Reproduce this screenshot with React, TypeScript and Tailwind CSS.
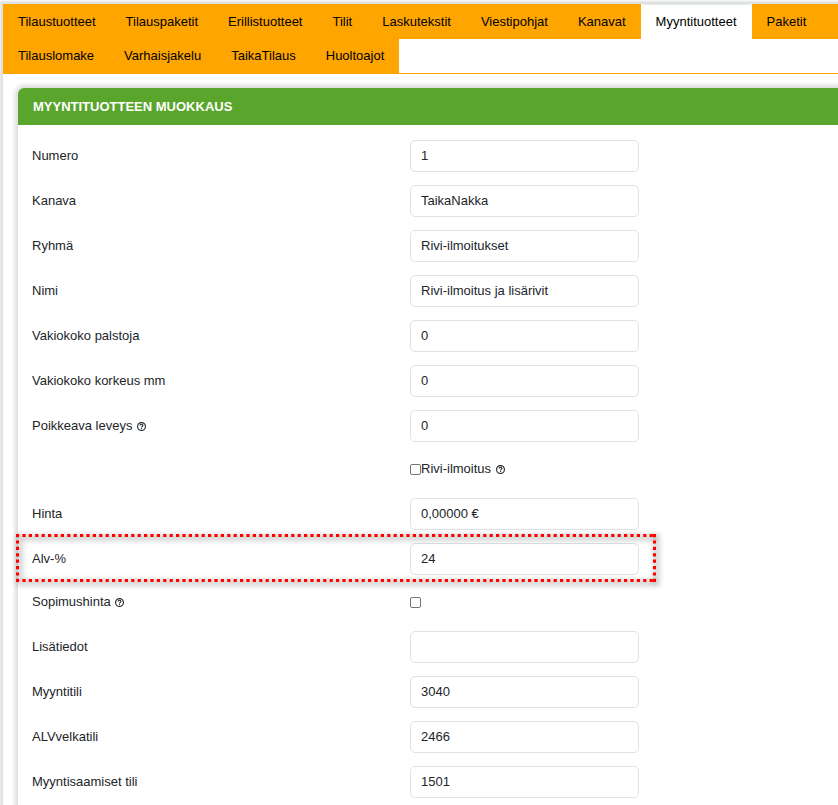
import type { ReactNode } from "react";

const tabs = [
  "Tilaustuotteet",
  "Tilauspaketit",
  "Erillistuotteet",
  "Tilit",
  "Laskutekstit",
  "Viestipohjat",
  "Kanavat",
  "Myyntituotteet",
  "Paketit",
  "Tilauslomake",
  "Varhaisjakelu",
  "TaikaTilaus",
  "Huoltoajot",
];

function tabClass(name: string) {
  if (name === "Myyntituotteet") return "bg-white rounded-t-sm border-t border-[#dff0e0]";
  if (name === "Paketit") return "bg-[#ffa500] grow";
  return "bg-[#ffa500]";
}

function HelpIcon() {
  return (
    <svg viewBox="0 0 16 16" className="ml-px inline-block size-[9px]" fill="none" stroke="#212529" aria-hidden="true">
      <circle cx="8" cy="8" r="7" strokeWidth="2" />
      <path d="M5.400 6.400C5.400 4.800 6.500 4 8 4s2.600.9 2.600 2.200C10.600 7.700 8 7.800 8 9.600" strokeWidth="2" />
      <path d="M8 10.800v2" strokeWidth="2" />
    </svg>
  );
}

function Row({ children }: { children: ReactNode }) {
  return <div className="relative grid grid-cols-[378px_1fr] pb-[13px] leading-8">{children}</div>;
}

function Field({ id, label, value, help, marked }: { id: string; label: string; value: string; help?: boolean; marked?: boolean }) {
  return (
    <Row>
      <label htmlFor={id}>
        {label} {help && <HelpIcon />}
      </label>
      <input
        id={id}
        type="text"
        defaultValue={value}
        className="h-8 w-[229px] rounded-[5px] border border-[#dee2e6] bg-white px-[10px] outline-none"
      />
      {marked && (
        <svg
          className="pointer-events-none absolute -top-[9px] -left-4 h-12 w-[640px] overflow-visible drop-shadow-[2px_2px_3px_rgba(0,0,0,0.75)]"
          aria-hidden="true"
        >
          <path
            d="M0 1.500H640M0 46.500H640M1.500 0V48M638.500 0V48"
            fill="none"
            stroke="#f00"
            strokeWidth="3"
            strokeDasharray="3.200 3.200"
          />
        </svg>
      )}
    </Row>
  );
}

export default function App() {
  return (
    <div className="h-screen overflow-hidden bg-white pt-1 pl-[3px] font-['Liberation_Sans',Arial,sans-serif] text-[13px] text-[#212529]">
      <div className="min-h-full shadow-[0_0_2px_3px_#e0e0e0]">
        <nav>
          <ul className="flex flex-wrap border-b border-[#ffa500] pb-px">
            {tabs.map((name) => (
              <li key={name} className={`-mb-px flex h-[35px] items-center ${tabClass(name)}`}>
                <a href="#" className="px-[15px] text-black">
                  {name}
                </a>
              </li>
            ))}
          </ul>
        </nav>
        <section className="mt-[14px] ml-[15px] rounded-tl-md shadow-[0_0_4px_3px_#dcdcdc]">
          <h1 className="rounded-tl-md bg-[#5aa52c] px-[15px] text-[13px] leading-[37px] font-bold text-white">
            MYYNTITUOTTEEN MUOKKAUS
          </h1>
          <form className="bg-white pt-[15px] pl-[14px]">
            <Field id="numero" label="Numero" value="1" />
            <Field id="kanava" label="Kanava" value="TaikaNakka" />
            <Field id="ryhma" label="Ryhmä" value="Rivi-ilmoitukset" />
            <Field id="nimi" label="Nimi" value="Rivi-ilmoitus ja lisärivit" />
            <Field id="palstoja" label="Vakiokoko palstoja" value="0" />
            <Field id="korkeus" label="Vakiokoko korkeus mm" value="0" />
            <Field id="leveys" label="Poikkeava leveys" value="0" help />
            <div className="flex h-[43px] items-start pl-[378px] leading-[28px]">
              <label className="flex items-center">
                <input
                  type="checkbox"
                  className="size-[11px] appearance-none rounded-[2px] border border-[#767676] bg-white"
                />
                <span>
                  Rivi-ilmoitus <HelpIcon />
                </span>
              </label>
            </div>
            <Field id="hinta" label="Hinta" value="0,00000 €" />
            <Field id="alv" label="Alv-%" value="24" marked />
            <div className="grid h-[43px] grid-cols-[378px_1fr] items-start leading-[28px]">
              <label htmlFor="sopimushinta">
                Sopimushinta <HelpIcon />
              </label>
              <div className="flex h-[28px] items-center">
                <input
                  id="sopimushinta"
                  type="checkbox"
                  className="size-[11px] appearance-none rounded-[2px] border border-[#767676] bg-white"
                />
              </div>
            </div>
            <Field id="lisatiedot" label="Lisätiedot" value="" />
            <Field id="myyntitili" label="Myyntitili" value="3040" />
            <Field id="alvvelka" label="ALVvelkatili" value="2466" />
            <Field id="saamiset" label="Myyntisaamiset tili" value="1501" />
          </form>
        </section>
      </div>
    </div>
  );
}
